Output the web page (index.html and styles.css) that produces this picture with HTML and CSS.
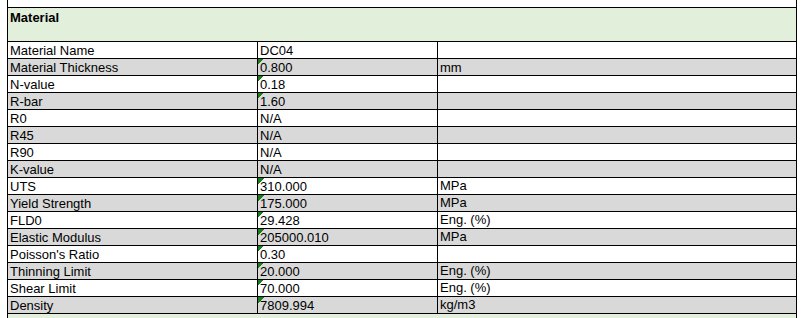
FILE: index.html
```html
<!DOCTYPE html>
<html>
<head>
<meta charset="utf-8">
<link rel="stylesheet" href="styles.css">
</head>
<body>
<div class="sheet">
  <div class="row blank"><div class="span"></div></div>
  <div class="row section"><div class="span">Material</div></div>

  <div class="row"><div class="c1">Material Name</div><div class="c2">DC04</div><div class="c3"></div></div>
  <div class="row alt"><div class="c1">Material Thickness</div><div class="c2 flag">0.800</div><div class="c3">mm</div></div>
  <div class="row"><div class="c1">N-value</div><div class="c2 flag">0.18</div><div class="c3"></div></div>
  <div class="row alt"><div class="c1">R-bar</div><div class="c2 flag">1.60</div><div class="c3"></div></div>
  <div class="row"><div class="c1">R0</div><div class="c2">N/A</div><div class="c3"></div></div>
  <div class="row alt"><div class="c1">R45</div><div class="c2">N/A</div><div class="c3"></div></div>
  <div class="row"><div class="c1">R90</div><div class="c2">N/A</div><div class="c3"></div></div>
  <div class="row alt"><div class="c1">K-value</div><div class="c2">N/A</div><div class="c3"></div></div>
  <div class="row"><div class="c1">UTS</div><div class="c2 flag">310.000</div><div class="c3 top">MPa</div></div>
  <div class="row alt"><div class="c1">Yield Strength</div><div class="c2 flag">175.000</div><div class="c3 top">MPa</div></div>
  <div class="row"><div class="c1">FLD0</div><div class="c2 flag">29.428</div><div class="c3 top">Eng. (%)</div></div>
  <div class="row alt"><div class="c1">Elastic Modulus</div><div class="c2 flag">205000.010</div><div class="c3 top">MPa</div></div>
  <div class="row"><div class="c1">Poisson's Ratio</div><div class="c2 flag">0.30</div><div class="c3"></div></div>
  <div class="row alt"><div class="c1">Thinning Limit</div><div class="c2 flag">20.000</div><div class="c3 top">Eng. (%)</div></div>
  <div class="row"><div class="c1">Shear Limit</div><div class="c2 flag">70.000</div><div class="c3 top">Eng. (%)</div></div>
  <div class="row alt"><div class="c1">Density</div><div class="c2 flag">7809.994</div><div class="c3 top">kg/m3</div></div>

  <div class="row section"><div class="span">Process Parameters</div></div>
</div>
</body>
</html>
```

FILE: styles.css
```css
html, body {
  margin: 0;
  padding: 0;
  background: #ffffff;
}
body {
  font-family: "Liberation Sans", Arial, sans-serif;
  font-size: 13px;
  color: #000000;
  overflow: hidden;
}
.sheet {
  margin-left: 7px;
  width: 790px;
  border-left: 1px solid #000;
  border-right: 1px solid #000;
  box-sizing: border-box;
}
.row {
  display: grid;
  grid-template-columns: 250px 180px 1fr;
  height: 17px;
  border-bottom: 1px solid #000;
  box-sizing: border-box;
  background: #ffffff;
}
.row.alt {
  background: #d9d9d9;
}
.row.blank {
  height: 8px;
}
.row.section {
  height: 34px;
  background: #e2efda;
}
.span {
  grid-column: 1 / -1;
  font-weight: bold;
  padding: 2px 0 0 2px;
  line-height: 16px;
}
.c1, .c2, .c3 {
  line-height: 16px;
  padding: 1px 0 0 2px;
  box-sizing: border-box;
  white-space: nowrap;
  overflow: hidden;
}
.c1, .c2 {
  border-right: 1px solid #000;
}
.c3.top {
  padding-top: 0;
  line-height: 15px;
}
.c2.flag {
  background-image: linear-gradient(to bottom right, #16801a 50%, transparent 50%);
  background-size: 6px 6px;
  background-repeat: no-repeat;
  background-position: 0 0;
}
```
